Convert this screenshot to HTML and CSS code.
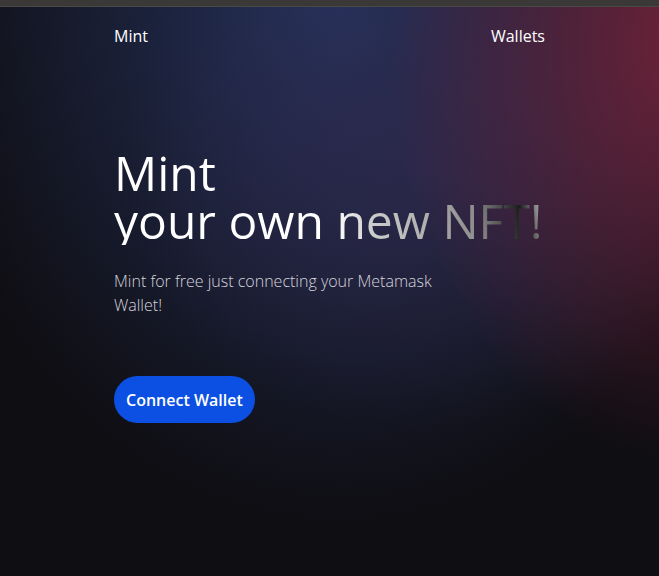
FILE: index.html
```html
<!DOCTYPE html>
<html lang="en">
<head>
<meta charset="utf-8">
<title>Mint NFT</title>
<link rel="stylesheet" href="styles.css">
</head>
<body>
<div class="topbar"></div>
<div class="page">
  <nav class="nav">
    <a class="nav-link" href="#">Mint</a>
    <a class="nav-link" href="#">Wallets</a>
  </nav>
  <main class="hero">
    <h1 class="title">Mint<br>your own new NFT!</h1>
    <p class="lead">Mint for free just connecting your Metamask Wallet!</p>
    <button class="btn">Connect Wallet</button>
  </main>
</div>
</body>
</html>
```
FILE: styles.css
```css
html, body {
  margin: 0;
  padding: 0;
  height: 100%;
}
body {
  font-family: "Open Sans", "Noto Sans", sans-serif;
  color: #fff;
  background-color: #0f0e13;
  background-image:
    radial-gradient(ellipse 300px 420px at 690px 40px, rgba(120, 36, 60, 0.9), rgba(120, 36, 60, 0) 100%),
    radial-gradient(ellipse 300px 260px at 420px 170px, rgba(52, 42, 80, 0.6), rgba(52, 42, 80, 0) 100%),
    radial-gradient(ellipse 420px 520px at 340px 0px, rgba(38, 52, 96, 0.95), rgba(38, 52, 96, 0) 100%);
  background-repeat: no-repeat;
  min-height: 576px;
  overflow: hidden;
}
.topbar {
  height: 6px;
  background: #3b3937;
  border-bottom: 1px solid #4b4946;
}
.page {
  width: 431px;
  margin: 0 auto;
}
.nav {
  display: flex;
  justify-content: space-between;
  align-items: center;
  height: 58px;
}
.nav-link {
  color: #fff;
  text-decoration: none;
  font-size: 16px;
  font-weight: 400;
}
.hero {
  padding-top: 84px;
}
.title {
  margin: 0;
  font-size: 48px;
  font-weight: 400;
  line-height: 48px;
  white-space: nowrap;
  background-image: linear-gradient(80deg, #ffffff 0%, #ffffff 50%, #cdcdcd 58%, #b0b0b0 70%, #8c8c8c 82%, #4a4a4a 88%, #1c1c1c 92%, #cfcfcf 98%, #dadada 100%);
  -webkit-background-clip: text;
  background-clip: text;
  color: transparent;
}
.lead {
  margin: 24px 0 0;
  width: 330px;
  font-size: 16px;
  font-weight: 300;
  line-height: 24px;
  color: #d4d4dc;
}
.btn {
  margin-top: 59px;
  height: 47px;
  padding: 0 12px;
  border: none;
  border-radius: 24px;
  background: #0b50e3;
  color: #fff;
  font-family: "Open Sans", "Noto Sans", sans-serif;
  font-size: 16px;
  font-weight: 600;
  cursor: pointer;
}
```
